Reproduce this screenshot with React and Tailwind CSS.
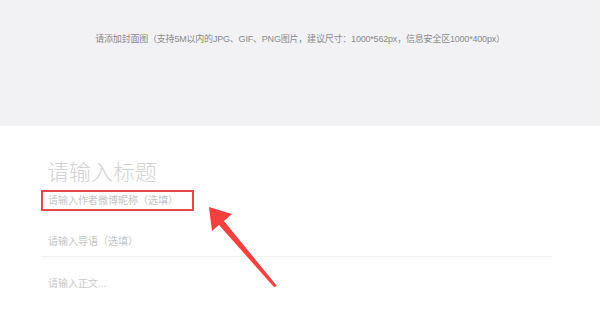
import React from 'react'

function Arrow() {
  return (
    <svg className="absolute left-0 top-0" width="600" height="318" viewBox="0 0 600 318">
      <polygon points="209,207 232,214 224,221 277,286 274,287 219,225 212,231" fill="#f2413f" />
    </svg>
  )
}

export default function App() {
  return (
    <div className="relative w-[600px] h-[318px] overflow-hidden bg-white font-['Liberation_Sans','Noto_Sans_CJK_SC',sans-serif]">
      <div className="h-[126px] bg-[#f2f2f4] flex justify-center pt-[33px]">
        <p className="text-[9px] text-[#8a8a8a] tracking-[-0.2px]">
          请添加封面图（支持5M以内的JPG、GIF、PNG图片，建议尺寸：1000*562px，信息安全区1000*400px）
        </p>
      </div>
      <div className="px-[41px] pt-[32px]">
        <h1 className="pl-[6px] text-[22px] leading-[30px] font-light text-[#d2d2d2]">请输入标题</h1>
        <div className="mt-[2px] w-[153px] h-[21px] border-2 border-[#e5484a] flex items-center pl-[5px]">
          <span className="text-[10px] text-[#c4c4c4]">请输入作者微博昵称（选填）</span>
        </div>
        <div className="h-[46px] border-b border-[#f0f0f0] w-[511px] pl-[7px] pt-[17px]">
          <span className="text-[10px] text-[#c4c4c4]">请输入导语（选填）</span>
        </div>
        <div className="pl-[7px] pt-[13px]">
          <span className="text-[10px] text-[#c8c8c8]">请输入正文...</span>
        </div>
      </div>
      <Arrow />
    </div>
  )
}
